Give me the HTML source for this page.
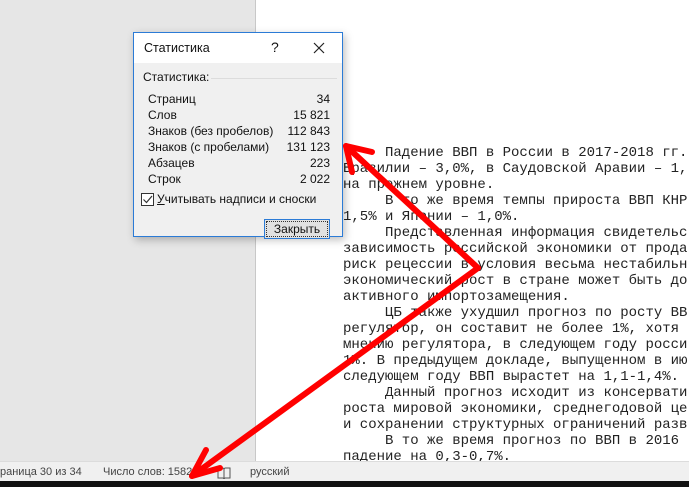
<!DOCTYPE html><html><head><meta charset="utf-8"><style>
body{margin:0;width:689px;height:487px;overflow:hidden;background:#e6e6e6;position:relative;font-family:"Liberation Sans","DejaVu Sans",sans-serif}
.page{position:absolute;left:255px;top:0;width:440px;height:461px;background:#fff;border-left:1px solid #c8c8c8}
.txt{position:absolute;left:343px;top:145px;font-family:"Liberation Mono",monospace;font-size:14px;line-height:16px;color:#222;white-space:pre}
.status{position:absolute;left:0;top:461px;width:689px;height:20px;background:#f0f0f0;border-top:1px solid #dcdcdc;font-size:11px;color:#444}
.status span{position:absolute;top:4px}
.black{position:absolute;left:0;top:481px;width:689px;height:6px;background:#111}
.dlg{position:absolute;left:133px;top:32px;width:208px;height:203px;background:#f0f0f0;border:1px solid #2b7bd6;box-shadow:2px 3px 8px rgba(0,0,0,.25);font-size:12px;color:#111}
.tb{height:30px;background:#fff;position:relative}
.row{position:absolute;left:14px;width:182px}
.row b{font-weight:normal;position:absolute;right:0}
</style></head><body>
<div class="page"></div>
<div class="txt">     Падение ВВП в России в 2017-2018 гг.
Бразилии – 3,0%, в Саудовской Аравии – 1,
на прежнем уровне.
     В то же время темпы прироста ВВП КНР
1,5% и Японии – 1,0%.
     Представленная информация свидетельс
зависимость российской экономики от прода
риск рецессии в условия весьма нестабильн
экономический рост в стране может быть до
активного импортозамещения.
     ЦБ также ухудшил прогноз по росту ВВ
регулятор, он составит не более 1%, хотя 
мнению регулятора, в следующем году росси
1%. В предыдущем докладе, выпущенном в ию
следующем году ВВП вырастет на 1,1-1,4%.
     Данный прогноз исходит из консервати
роста мировой экономики, среднегодовой це
и сохранении структурных ограничений разв
     В то же время прогноз по ВВП в 2016
падение на 0,3-0,7%.</div>
<div class="status"><span style="left:0">раница 30 из 34</span><span style="left:103px">Число слов: 15821</span>
<svg style="position:absolute;left:217px;top:4px" width="14" height="13"><path d="M1 2L1 12L6 12L7 13L8 12L13 12L13 2L8 2L7 3L6 2Z M7 3L7 12" stroke="#555" fill="none" stroke-width="1"/></svg>
<span style="left:250px">русский</span></div>
<div class="black"></div>
<div class="dlg">
<div class="tb"><span style="position:absolute;left:10px;top:8px;font-size:12.5px">Статистика</span><span style="position:absolute;left:137px;top:6px;font-size:14px">?</span>
<svg style="position:absolute;left:179px;top:9px" width="12" height="12"><path d="M1 1L11 11M11 1L1 11" stroke="#222" stroke-width="1.2"/></svg></div>
<div style="position:absolute;left:9px;top:37px">Статистика:</div>
<div style="position:absolute;left:77px;top:45px;width:126px;border-top:1px solid #dcdcdc"></div>
<div class="row" style="top:59px">Страниц<b>34</b></div>
<div class="row" style="top:75px">Слов<b>15 821</b></div>
<div class="row" style="top:91px">Знаков (без пробелов)<b>112 843</b></div>
<div class="row" style="top:107px">Знаков (с пробелами)<b>131 123</b></div>
<div class="row" style="top:123px">Абзацев<b>223</b></div>
<div class="row" style="top:139px">Строк<b>2 022</b></div>
<div style="position:absolute;left:7px;top:160px;width:11px;height:11px;border:1px solid #333;background:#fff"><svg width="11" height="11" style="position:absolute;left:0;top:0"><path d="M1.5 5.5L4.5 8.5L10 2" stroke="#333" stroke-width="1.2" fill="none"/></svg></div>
<div style="position:absolute;left:23px;top:159px"><u>У</u>читывать надписи и сноски</div>
<div style="position:absolute;left:130px;top:186px;width:66px;height:20px;border:1px solid #2b7bd6;background:#e1e1e1;box-sizing:border-box;text-align:center;line-height:18px;outline:1px dotted #333;outline-offset:-3px">Закрыть</div>
</div>
<svg style="position:absolute;left:0;top:0" width="689" height="487">
<g stroke="#f00" stroke-width="6" fill="none" stroke-linecap="round" stroke-linejoin="round">
<path d="M478 268L346 146"/><path d="M346 146L372 152M346 146L352 172"/>
<path d="M478 268L192 476"/><path d="M192 476L206 450M192 476L220 468"/>
</g></svg>
</body></html>
